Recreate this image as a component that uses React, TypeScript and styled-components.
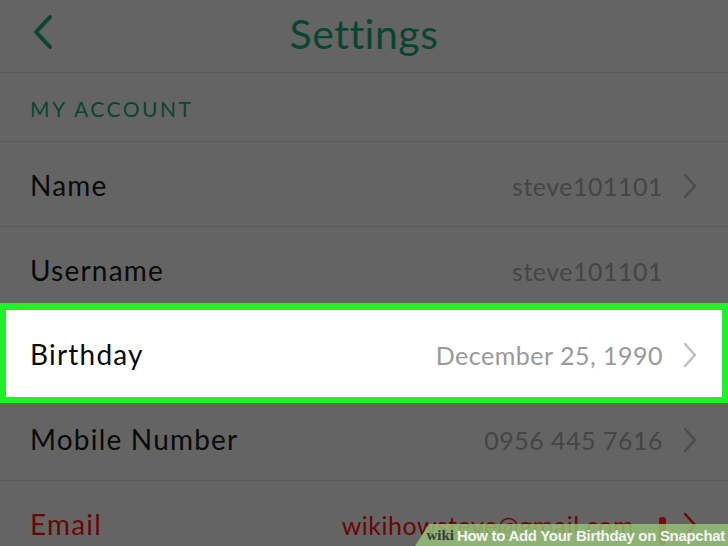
import React from "react";
import styled, { createGlobalStyle } from "styled-components";

const GlobalStyle = createGlobalStyle`
  html, body {
    margin: 0;
    padding: 0;
    background: #646464;
  }
  body {
    font-family: "Lato", "Open Sans", sans-serif;
  }
`;

interface Item {
  label: string;
  value: string;
  chevron: boolean;
  highlight?: boolean;
  warn?: boolean;
}

const items: Item[] = [
  { label: "Name", value: "steve101101", chevron: true },
  { label: "Username", value: "steve101101", chevron: false },
  { label: "Birthday", value: "December 25, 1990", chevron: true, highlight: true },
  { label: "Mobile Number", value: "0956 445 7616", chevron: true },
  { label: "Email", value: "wikihowsteve@gmail.com", chevron: true, warn: true },
];

function Chevron({ color }: { color: string }) {
  return (
    <ChevronSvg viewBox="0 0 16 28">
      <path d="M3 3 L13 14 L3 25" fill="none" stroke={color} strokeWidth="2.4" strokeLinecap="round" strokeLinejoin="round" />
    </ChevronSvg>
  );
}

function App() {
  return (
    <Screen>
      <GlobalStyle />
      <Header>
        <BackButton>
          <svg width="22" height="38" viewBox="0 0 22 38">
            <path d="M18 4 L4 19 L18 34" fill="none" stroke="#094532" strokeWidth="4" strokeLinecap="round" strokeLinejoin="round" />
          </svg>
        </BackButton>
        <Title>Settings</Title>
      </Header>
      <SectionHead>MY ACCOUNT</SectionHead>
      <List>
        {items.map((item) =>
          item.highlight ? (
            <HighlightBox key={item.label}>
              <Row $light>
                <Label>{item.label}</Label>
                <Value $light>{item.value}</Value>
                <Chevron color="#bdbdbd" />
              </Row>
            </HighlightBox>
          ) : (
            <Row key={item.label}>
              <Label $warn={item.warn}>{item.label}</Label>
              <Value $warn={item.warn}>{item.value}</Value>
              {item.warn && <Bang />}
              {item.chevron ? <Chevron color={item.warn ? "#6a0606" : "#4c4c4c"} /> : <Spacer />}
            </Row>
          )
        )}
      </List>
      <Watermark>
        <WikiMark>wiki</WikiMark>
        <WmText>How to Add Your Birthday on Snapchat</WmText>
      </Watermark>
    </Screen>
  );
}

export default App;

const Screen = styled.div`
  position: relative;
  width: 728px;
  height: 546px;
  overflow: hidden;
  background: #646464;
`;

const Header = styled.div`
  position: relative;
  height: 72px;
  display: flex;
  align-items: center;
  justify-content: center;
  border-bottom: 1px solid #5a5a5a;
`;

const BackButton = styled.div`
  position: absolute;
  left: 32px;
  top: 13px;
  display: flex;
`;

const Title = styled.h1`
  margin: 0 0 6px 0;
  font-size: 41px;
  font-weight: 400;
  color: #094532;
  letter-spacing: 0.5px;
`;

const SectionHead = styled.div`
  height: 69px;
  display: flex;
  align-items: center;
  padding-left: 30px;
  padding-top: 2px;
  box-sizing: border-box;
  font-size: 21px;
  letter-spacing: 2.5px;
  color: #094532;
  border-bottom: 1px solid #5a5a5a;
`;

const List = styled.div`
  display: flex;
  flex-direction: column;
`;

const Row = styled.div<{ $light?: boolean }>`
  height: ${({ $light }) => ($light ? "87px" : "85px")};
  display: flex;
  align-items: center;
  padding: ${({ $light }) => ($light ? "3px 24px 0 24px" : "3px 30px 0 30px")};
  box-sizing: border-box;
  background: ${({ $light }) => ($light ? "#ffffff" : "transparent")};
  border-bottom: ${({ $light }) => ($light ? "none" : "1px solid #5a5a5a")};
`;

const HighlightBox = styled.div`
  margin-top: -9px;
  margin-bottom: -7px;
  border: 6px solid #22f02a;
  border-top-width: 7px;
  position: relative;
  z-index: 1;
`;

const Label = styled.span<{ $warn?: boolean }>`
  flex: 1;
  font-size: 28px;
  letter-spacing: 1.2px;
  color: ${({ $warn }) => ($warn ? "#6a0606" : "#0a0a0a")};
  padding-bottom: 2px;
`;

const Value = styled.span<{ $light?: boolean; $warn?: boolean }>`
  font-size: 25px;
  color: ${({ $light, $warn }) => ($warn ? "#6a0606" : $light ? "#999999" : "#454545")};
  margin-right: 19px;
  letter-spacing: 0.5px;
`;

const ChevronSvg = styled.svg`
  width: 16px;
  height: 28px;
  flex-shrink: 0;
`;

const Spacer = styled.span`
  width: 16px;
`;

const Bang = styled.span`
  width: 7px;
  height: 28px;
  border-radius: 3px;
  background: #7a0808;
  margin-left: 6px;
  margin-right: 16px;
  margin-top: 12px;
`;

const Watermark = styled.div`
  position: absolute;
  right: 0;
  bottom: 0;
  width: 313px;
  height: 22px;
  background: rgba(150, 195, 120, 0.82);
  clip-path: polygon(14px 0, 100% 0, 100% 100%, 0 100%);
  display: flex;
  align-items: center;
  justify-content: flex-end;
  gap: 3px;
  padding-right: 3px;
  box-sizing: border-box;
  font-family: "Liberation Sans", Arial, sans-serif;
  font-weight: 700;
  font-size: 15px;
`;

const WikiMark = styled.span`
  font-family: "Liberation Serif", serif;
  color: #3b3b3b;
`;

const WmText = styled.span`
  color: #f4f4f4;
  letter-spacing: -0.3px;
`;
